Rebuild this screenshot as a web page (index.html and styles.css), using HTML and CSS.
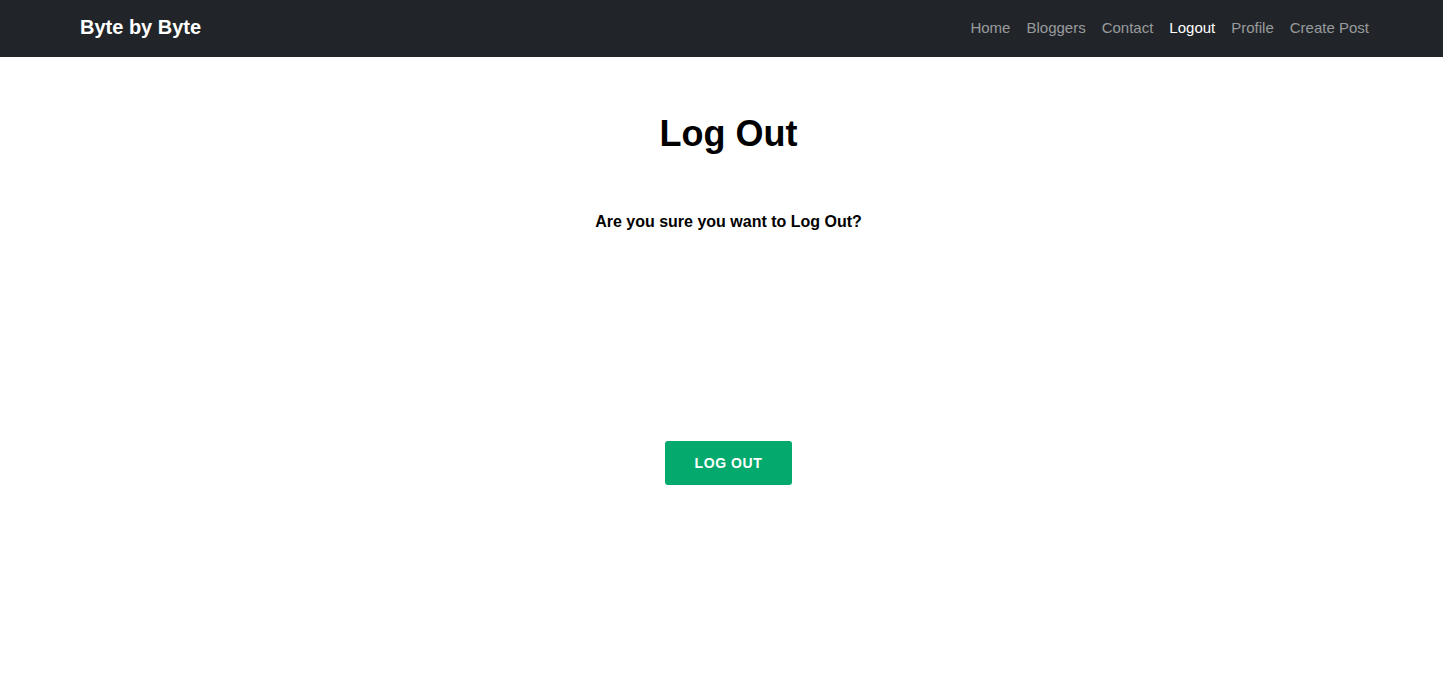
FILE: index.html
```html
<!DOCTYPE html>
<html lang="en">
<head>
<meta charset="utf-8">
<title>Log Out</title>
<link rel="stylesheet" href="styles.css">
</head>
<body>
<nav class="navbar">
  <div class="nav-inner">
    <a class="brand" href="#">Byte by Byte</a>
    <ul class="nav-links">
      <li><a href="#">Home</a></li>
      <li><a href="#">Bloggers</a></li>
      <li><a href="#">Contact</a></li>
      <li><a class="active" href="#">Logout</a></li>
      <li><a href="#">Profile</a></li>
      <li><a href="#">Create Post</a></li>
    </ul>
  </div>
</nav>
<main class="content">
  <h1 class="title">Log Out</h1>
  <p class="question">Are you sure you want to Log Out?</p>
  <button class="logout-btn" type="button">LOG OUT</button>
</main>
</body>
</html>
```
FILE: styles.css
```css
* { box-sizing: border-box; }
html, body { margin: 0; padding: 0; }
body {
  font-family: "Liberation Sans", Arial, sans-serif;
  background: #fff;
  color: #000;
  width: 1443px;
}
.navbar {
  background: #212529;
  height: 57px;
}
.nav-inner {
  height: 100%;
  padding: 0 66px 3px 80px;
  display: flex;
  align-items: center;
  justify-content: space-between;
}
.brand {
  color: #fff;
  font-weight: bold;
  font-size: 20px;
  text-decoration: none;
  margin-top: 0;
}
.nav-links {
  list-style: none;
  margin: 0;
  padding: 0;
  display: flex;
}
.nav-links a {
  display: block;
  padding: 8px 8px;
  color: rgba(255,255,255,0.55);
  text-decoration: none;
  font-size: 15px;
}
.nav-links a.active { color: #fff; }
.content {
  display: flex;
  flex-direction: column;
  align-items: center;
  padding-left: 14px;
}
.title {
  margin: 57px 0 0;
  font-size: 36px;
  font-weight: bold;
  line-height: 40px;
}
.question {
  margin: 58px 0 0;
  font-size: 16px;
  font-weight: bold;
  line-height: 20px;
}
.logout-btn {
  margin-top: 209px;
  width: 127px;
  height: 44px;
  border: none;
  border-radius: 3px;
  background: #04AA6D;
  color: #fff;
  font-family: "Liberation Sans", Arial, sans-serif;
  font-weight: bold;
  font-size: 14px;
  letter-spacing: 0.6px;
  cursor: pointer;
}
```
